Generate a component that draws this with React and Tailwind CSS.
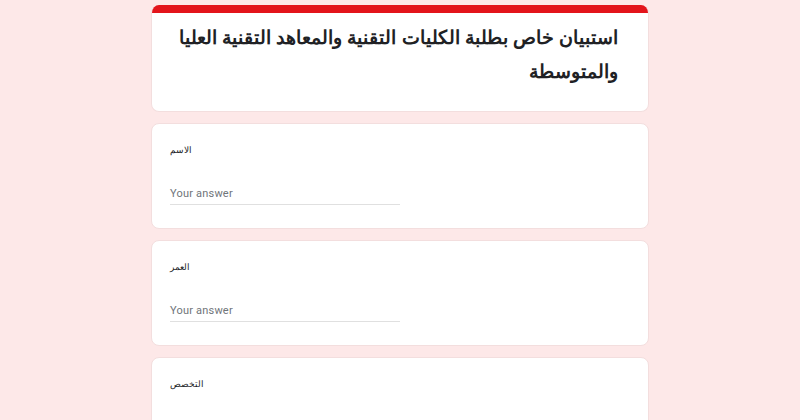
import React from "react";

function Question({ label }) {
  return (
    <div className="bg-white rounded-lg border border-[#f3dede] px-[18px] pt-[19px] pb-[23px]">
      <div className="text-[8.5px] leading-[14px] text-[#202124] text-left font-['Liberation_Sans',sans-serif]">
        {label}
      </div>
      <div className="mt-[30px] w-1/2 pb-[3px] border-b border-[#e0e0e0]">
        <div className="text-[11px] leading-[14px] text-[#70757a] tracking-[0.2px] font-['Roboto',sans-serif]">
          Your answer
        </div>
      </div>
    </div>
  );
}

export default function App() {
  return (
    <div className="w-[800px] h-[420px] overflow-hidden bg-[#fde8e8]">
      <div className="w-[498px] mx-auto pt-[5px] flex flex-col gap-[11px]">
        <div className="bg-white rounded-lg border-x border-b border-[#f3dede] overflow-hidden">
          <div className="h-[8px] bg-[#e3141b]" />
          <div
            dir="rtl"
            className="pr-[30px] pl-[18px] pt-[8px] pb-[22px] text-[18.5px] leading-[34px] font-bold text-[#202124] whitespace-nowrap font-['Liberation_Sans',sans-serif]"
          >
            استبيان خاص بطلبة الكليات التقنية والمعاهد التقنية العليا
            <br />
            والمتوسطة
          </div>
        </div>
        <Question label="الاسم" />
        <Question label="العمر" />
        <Question label="التخصص" />
      </div>
    </div>
  );
}
